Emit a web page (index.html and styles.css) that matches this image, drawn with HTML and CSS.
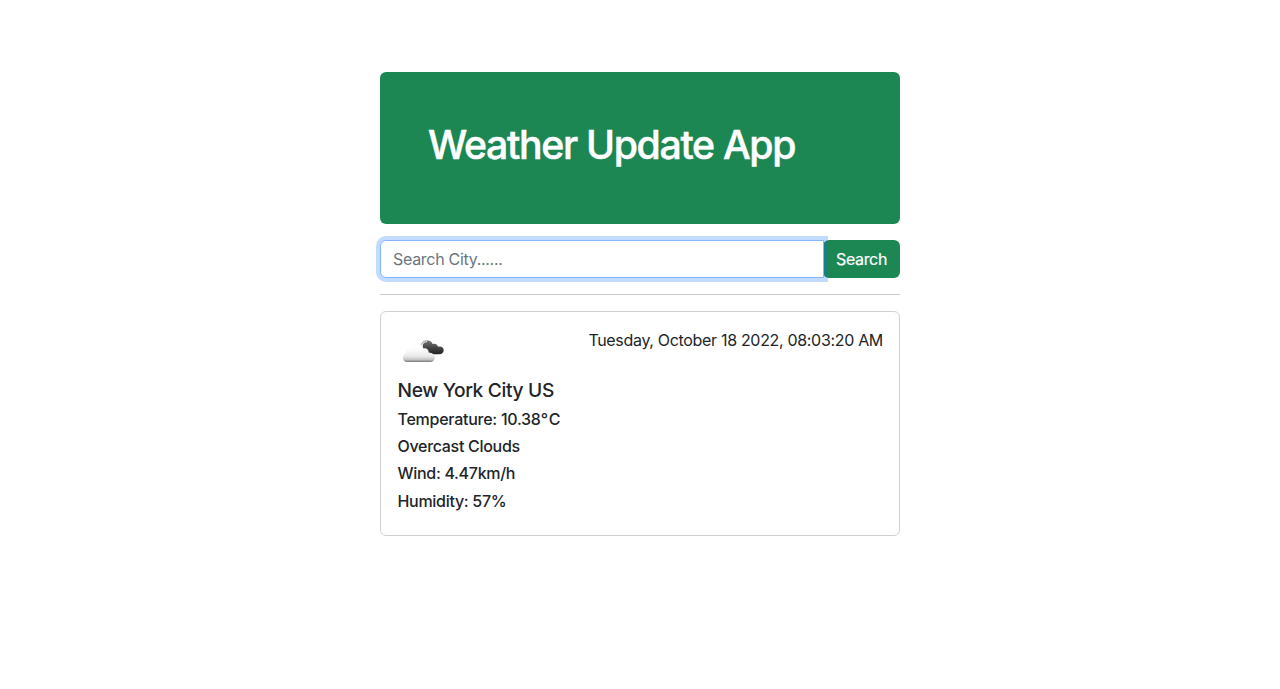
FILE: index.html
```html
<!DOCTYPE html>
<html lang="en">
<head>
<meta charset="utf-8">
<title>Weather Update App</title>
<link rel="stylesheet" href="styles.css">
</head>
<body>
<main class="app">
  <header class="banner"><h1 class="title">Weather Update App</h1></header>
  <form class="search">
    <input class="search-input" type="text" placeholder="Search City......">
    <button class="search-button" type="button">Search</button>
  </form>
  <hr class="divider">
  <section class="card">
    <div class="card-top">
      <svg class="weather-icon" viewBox="0 0 50 50" role="img" aria-label="Broken clouds">
        <defs>
          <linearGradient id="light" x1="0" y1="0" x2="0" y2="1">
            <stop offset="0" stop-color="#f6f6f6"/><stop offset=".12" stop-color="#fff"/><stop offset=".35" stop-color="#fcfcfc"/><stop offset=".7" stop-color="#e8e8e8"/><stop offset=".87" stop-color="#c5c5c5"/><stop offset="1" stop-color="#777"/>
          </linearGradient>
          <linearGradient id="dark" x1="0" y1="0" x2="0" y2="1">
            <stop offset="0" stop-color="#777"/><stop offset=".5" stop-color="#484848"/><stop offset="1" stop-color="#222"/>
          </linearGradient>
        </defs>
        <path d="M24.500 17.800c-.3-3.100 2-5.300 5.100-5.300 2.500 0 4.300 1.200 4.900 3.500 2.400-.9 4.900.4 5.600 2.700 3.200-.9 5.600.8 5.600 3.400 0 2.400-1.700 4.200-4.400 4.200h-6.800c-1.500 0-2.700-.6-3.400-1.600-2.500 0-4.400-.8-5-2.500-.8-.9-1.400-2.400-1.600-4.400z" fill="url(#dark)"/>
        <path d="M23.800 19.200c-.2-3.400 1.500-5.500 5.200-5.700" fill="none" stroke="#fff" stroke-width="1.100"/>
        <path d="M22.700 18.800c.1-3.400 2-5.700 5.600-6.100" fill="none" stroke="#888" stroke-width=".8"/>
        <path d="M9 34c-2.500 0-4.100-1.700-4.100-4.200 0-2.500 1.400-4 3.400-4.500-.5-3.200 1.300-5 3.900-4.900 1-3.500 3.500-5.100 6.600-5.100 3.300 0 5.600 2 6.200 5.200 3.300-.9 5.900 1 5.700 4.200 3.300-.2 6.100 1.700 6.100 4.700 0 2.700-1.900 4.600-4.700 4.600z" fill="url(#light)"/>
      </svg>
      <p class="date">Tuesday, October 18 2022, 08:03:20 AM</p>
    </div>
    <h2 class="city">New York City US</h2>
    <p class="detail temperature">Temperature: 10.38<span class="degree">°</span>C</p>
    <p class="detail condition">Overcast Clouds</p>
    <p class="detail wind">Wind: 4.47km/h</p>
    <p class="detail humidity">Humidity: 57%</p>
  </section>
</main>
</body>
</html>
```
FILE: styles.css
```css
* { box-sizing: border-box; }
body { margin: 0; background: #fff; color: #212529; font: 400 16px/24px Inter, "Liberation Sans", sans-serif; }
h1, h2, p { margin: 0; }
.app { width: 520px; margin: 72px auto 0; }
.banner { height: 152px; padding: 49px 48px 47px; border-radius: 6px; background: #1d8753; color: #fff; }
.title { font-size: 39.200px; font-weight: 500; line-height: 48px; letter-spacing: -1.320px; white-space: nowrap; -webkit-text-stroke: .5px #fff; }
.search { display: flex; margin: 16px 0 0; }
.search-input { z-index: 1; flex: 1; min-width: 0; height: 38px; padding: 6px 12px; border: 1px solid #86b7fe; border-radius: 6px 0 0 6px; outline: 0; box-shadow: 0 0 0 4px rgba(13, 110, 253, .25); color: #212529; font: inherit; letter-spacing: -.3px; }
.search-input::placeholder { color: #6c757d; opacity: 1; }
.search-button { width: 77px; height: 38px; margin-left: -1px; padding: 6px 0; border: 0; border-radius: 6px; background: #1d8753; color: #fff; font: inherit; letter-spacing: -.35px; -webkit-text-stroke: .2px #fff; }
.divider { height: 1px; margin: 16px 0; border: 0; background: #c8c9ca; }
.card { height: 225px; padding: 16px 16px 16px 16.500px; border: 1px solid #d0d1d2; border-radius: 6px; }
.card-top { display: flex; justify-content: space-between; height: 50px; }
.weather-icon { width: 50px; height: 50px; }
.date { letter-spacing: -.320px; white-space: nowrap; }
.city { margin-bottom: 8px; font-size: 19.200px; font-weight: 500; line-height: 24px; letter-spacing: -.340px; }
.detail { margin-bottom: 8px; font-weight: 500; line-height: 19.200px; letter-spacing: -.3px; }
.temperature { letter-spacing: -.260px; }
.degree { letter-spacing: .8px; }
```
